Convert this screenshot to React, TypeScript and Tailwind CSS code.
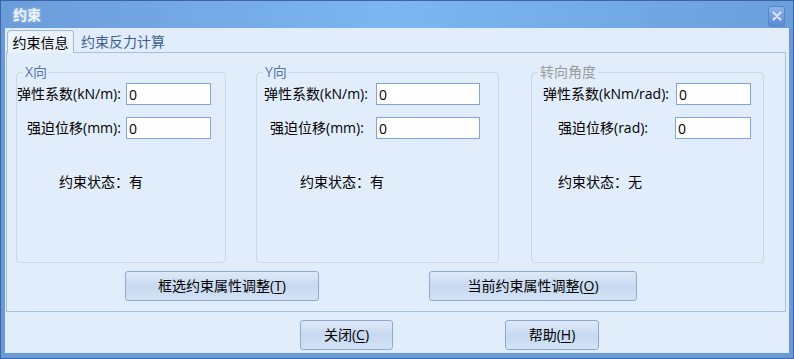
import React from 'react'

//one row inside a group: label + text box
type Row = {
  label: string
  labelCls: string // margin + width so the box lands where it should
  inputCls: string
}

type Group = {
  title: string
  titleCls: string
  boxCls: string
  rows: Row[]
  statusCls: string
  status: string
}

const groups: Group[] = [
  {
    title: 'X向',
    titleCls: 'text-[#5677ab]',
    boxCls: 'w-[210px]',
    rows: [
      { label: '弹性系数(kN/m):', labelCls: 'ml-0 w-[109px]', inputCls: 'w-[85px]' },
      { label: '强迫位移(mm):', labelCls: 'ml-[10px] w-[99px]', inputCls: 'w-[85px]' },
    ],
    statusCls: 'ml-[42px]',
    status: '约束状态：有',
  },
  {
    title: 'Y向',
    titleCls: 'text-[#5677ab]',
    boxCls: 'w-[243px]',
    rows: [
      { label: '弹性系数(kN/m):', labelCls: 'ml-[7px] w-[112px]', inputCls: 'w-[104px]' },
      { label: '强迫位移(mm):', labelCls: 'ml-[13px] w-[106px]', inputCls: 'w-[104px]' },
    ],
    statusCls: 'ml-[43px]',
    status: '约束状态：有',
  },
  {
    title: '转向角度',
    titleCls: 'text-[#9a9a9a]',
    boxCls: 'w-[233px]',
    rows: [
      { label: '弹性系数(kNm/rad):', labelCls: 'ml-[11px] w-[133px]', inputCls: 'w-[75px]' },
      { label: '强迫位移(rad):', labelCls: 'ml-[26px] w-[117px]', inputCls: 'w-[76px]' },
    ],
    statusCls: 'ml-[26px]',
    status: '约束状态：无',
  },
]

//windows-ish blue button, key letter underlined
function DlgButton({ text, hot, className }: { text: string; hot: string; className: string }) {
  return (
    <button
      type="button"
      className={`h-[30px] rounded-[3px] border border-[#8eaad2] bg-gradient-to-b from-[#dfeaf8] via-[#c7d9f0] to-[#d3e2f5] text-[14px] text-black leading-none ${className}`}
    >
      {text}(<span className="underline underline-offset-2">{hot}</span>)
    </button>
  )
}

function GroupBox({ g }: { g: Group }) {
  return (
    <div className={`relative h-[191px] rounded-[4px] border border-[#c6d6ec] ${g.boxCls}`}>
      {/* legend sits over the top border */}
      <span className={`absolute left-[6px] top-[-10px] bg-[#e1edfb] px-[2px] text-[14px] leading-[18px] ${g.titleCls}`}>
        {g.title}
      </span>
      <div className="flex flex-col gap-[12px] pt-[10px]">
        {g.rows.map((r) => (
          <div key={r.label} className="flex h-[22px] items-center">
            <span className={`shrink-0 whitespace-nowrap text-[14px] leading-[18px] text-black ${r.labelCls}`}>
              {r.label}
            </span>
            <input
              type="text"
              defaultValue="0"
              className={`h-[22px] border border-[#7fa6db] bg-white pl-[2px] text-[14px] text-black outline-none ${r.inputCls}`}
            />
          </div>
        ))}
      </div>
      <div className={`mt-[35px] text-[14px] leading-[16px] text-black ${g.statusCls}`}>{g.status}</div>
    </div>
  )
}

export default function App() {
  return (
    <div
      className="flex h-[359px] w-[794px] flex-col border border-[#3d63a9] bg-[#6a9bd7]"
      style={{ fontFamily: '"Open Sans", "Noto Sans CJK SC", sans-serif' }}
    >
      {/* title bar */}
      <div className="flex h-[27px] items-center justify-between bg-gradient-to-r from-[#6b9cda] via-[#7cb7f1] to-[#6a9fdc] pl-[12px] pr-[8px]">
        <span className="text-[14px] font-bold text-[#edf3fb] [text-shadow:0_0_3px_rgba(255,255,255,0.6)]">约束</span>
        <div className="mt-[3px] flex h-[21px] w-[17px] items-center justify-center rounded-[3px] border border-[#5a85c6] bg-gradient-to-b from-[#8db6ea] via-[#6f9ddd] to-[#5a89cf]">
          <svg width="10" height="10" viewBox="0 0 10 10">
            <path d="M1.5 1.5 L8.5 8.5 M8.5 1.5 L1.5 8.5" stroke="#d5e2f3" strokeWidth="2.4" strokeLinecap="round" />
          </svg>
        </div>
      </div>

      {/* client area */}
      <div className="mx-[4px] flex h-[325px] flex-col bg-[#e1edfb]">
        {/* tabs */}
        <div className="flex h-[24px] items-end pl-[2px]">
          <div className="relative z-10 -mb-px flex h-[23px] w-[67px] items-center justify-center rounded-t-[4px] border border-b-0 border-[#9dbbe2] bg-[#eaf2fc] text-[14px] text-black">
            约束信息
          </div>
          <div className="flex h-[21px] items-center pl-[7px] text-[14px] text-[#3f5f92]">约束反力计算</div>
        </div>

        {/* tab page */}
        <div className="ml-[1px] h-[260px] w-[780px] border border-[#a3bfe3] pl-[9px] pt-[19px]">
          <div className="flex">
            <GroupBox g={groups[0]} />
            <div className="ml-[30px]">
              <GroupBox g={groups[1]} />
            </div>
            <div className="ml-[32px]">
              <GroupBox g={groups[2]} />
            </div>
          </div>
          <div className="mt-[8px] flex pl-[109px]">
            <DlgButton text="框选约束属性调整" hot="T" className="w-[194px]" />
            <DlgButton text="当前约束属性调整" hot="O" className="ml-[110px] w-[208px]" />
          </div>
        </div>

        {/* bottom buttons */}
        <div className="mt-[8px] flex pl-[295px]">
          <DlgButton text="关闭" hot="C" className="w-[93px]" />
          <DlgButton text="帮助" hot="H" className="ml-[112px] w-[94px]" />
        </div>
      </div>
    </div>
  )
}
